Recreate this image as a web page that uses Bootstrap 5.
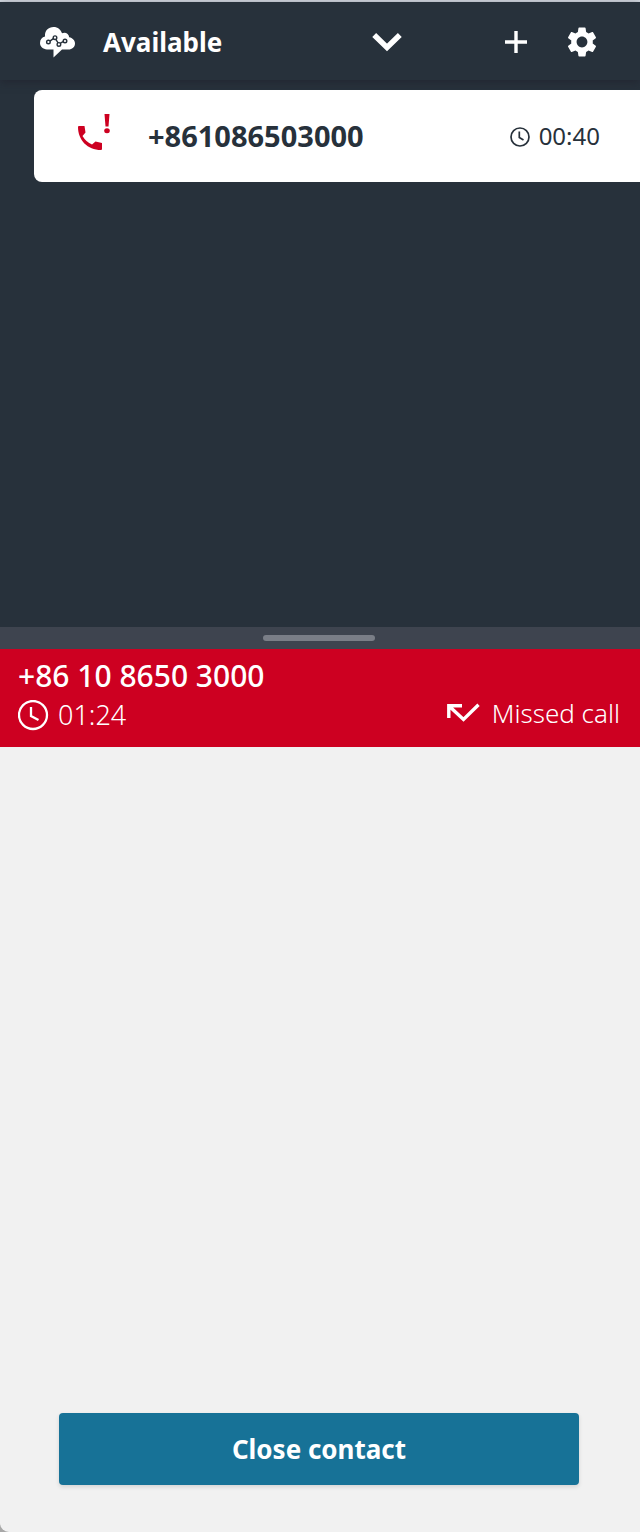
<!DOCTYPE html>
<html lang="en">
<head>
<meta charset="utf-8">
<meta name="viewport" content="width=device-width, initial-scale=1">
<title>Contact Control Panel</title>
<link href="https://cdn.jsdelivr.net/npm/bootstrap@5.3.0/dist/css/bootstrap.min.css" rel="stylesheet">
<style>
  body { font-family: "Noto Sans", "Open Sans", sans-serif; background: #f1f1f1; color: #fff; }
  svg { display: block; flex: none; }
  .ccp { display: grid; grid-template-rows: 627fr 22px 883fr; min-height: 100vh; border-bottom-left-radius: 9px; background: #f1f1f1; overflow: hidden; }
  .ccp-backdrop { background: #a8a8a8; }
  .contacts-pane { background: #27313b; border-top: 2px solid #d5dbe3; }
  .status-bar { height: 78px; padding: 2px 40px 0; box-shadow: 0 2px 8px rgba(30, 28, 40, .5); }
  .plain-btn { background: none; border: 0; padding: 0; color: inherit; }
  .status-btn { width: 363px; font-size: 26px; font-weight: 700; line-height: 36px; }
  .status-label { margin-left: 28px; }
  .status-actions { gap: 37px; }
  .contact-row { height: 92px; margin: 10px 0 0 34px; padding: 0 40px 0 42px; background: #fff; color: #27313b; border-radius: 8px 0 0 8px; text-decoration: none; }
  .contact-number { margin-left: 36px; font-size: 29px; font-weight: 700; }
  .contact-time { font-size: 24px; gap: 8px; }
  .resize-bar { background: #3e444f; padding-right: 2px; }
  .resize-grip { width: 112px; height: 6px; border-radius: 3px; background: #7a7e87; }
  .call-banner { height: 98px; padding: 8px 20px 0 18px; background: #cd0021; }
  .call-number { font-size: 30px; font-weight: 500; line-height: 38px; margin: 0; }
  .call-time { font-size: 27px; font-weight: 300; line-height: 40px; gap: 9px; }
  .call-state { font-size: 26px; font-weight: 300; line-height: 36px; gap: 9px; }
  .close-area { padding: 0 61px 47px 59px; }
  .close-btn { height: 72px; font-size: 26px; font-weight: 700; color: #fff; background: #177297; border: 0; border-radius: 4px; box-shadow: 0 2px 4px rgba(0, 0, 0, .12); }
  .close-btn:hover { color: #fff; background: #126283; }
</style>
</head>
<body>
<div class="ccp-backdrop">
<div class="ccp">
  <section class="contacts-pane" aria-label="Contacts">
    <header class="status-bar d-flex align-items-center justify-content-between">
      <button type="button" class="plain-btn status-btn d-flex align-items-center" aria-haspopup="listbox">
        <svg width="35" height="32" viewBox="0 0 35 32" aria-hidden="true">
          <path fill="#fff" d="M7 23.500C3 23 0 20.500 0 17C0 13.500 2 11.300 5 10.500C4.500 4.500 8.500 1 13.500 1C18 1 20.700 3.500 22 7.300C25 5.700 29 7.500 29.200 11.300C32.500 12 35 14.300 35 17.500C35 21 32 23.500 28.500 23.500H22L13.500 31.500V23.500Z"/>
          <g fill="none" stroke="#27313b" stroke-width="1.400"><path d="M9.900 15.100L13.300 12.600M15.800 13.400L18.100 16.800M20.400 17.200L23.200 15.700"/><circle cx="8.400" cy="16" r="1.800"/><circle cx="15" cy="11.700" r="1.800"/><circle cx="18.900" cy="18.400" r="1.800"/><circle cx="25" cy="15" r="1.800"/></g>
        </svg>
        <span class="status-label">Available</span>
        <svg class="ms-auto" width="32" height="20" viewBox="0 0 32 20" aria-hidden="true"><path d="M3.200 3L16 15.500L28.800 3" fill="none" stroke="#fff" stroke-width="5.500"/></svg>
      </button>
      <div class="status-actions d-flex align-items-center">
        <button type="button" class="plain-btn" aria-label="New contact"><svg width="22" height="22" viewBox="0 0 22 22"><path d="M11 0V22M0 11H22" stroke="#fff" stroke-width="3.400"/></svg></button>
        <button type="button" class="plain-btn" aria-label="Settings"><svg width="36" height="36" viewBox="0 0 24 24"><path fill="#fff" d="M19.140 12.940c.04-.3.060-.61.060-.94 0-.32-.02-.64-.07-.94l2.030-1.580c.18-.14.230-.41.120-.61l-1.920-3.320c-.12-.22-.37-.29-.59-.22l-2.390.96c-.5-.38-1.030-.7-1.620-.94l-.36-2.540c-.04-.24-.24-.41-.48-.41h-3.840c-.24 0-.43.170-.47.410l-.36 2.540c-.59.240-1.130.57-1.620.94l-2.390-.96c-.22-.08-.47 0-.59.220L2.740 8.870c-.12.210-.08.470.12.610l2.030 1.580c-.05.300-.09.630-.09.940s.02.640.070.940l-2.030 1.580c-.18.140-.23.410-.12.610l1.920 3.320c.12.220.37.290.59.220l2.390-.96c.5.380 1.030.7 1.620.94l.36 2.540c.05.240.24.410.48.410h3.840c.24 0 .44-.17.470-.41l.36-2.540c.59-.24 1.130-.56 1.620-.94l2.390.96c.22.080.47 0 .59-.22l1.920-3.320c.12-.22.070-.47-.12-.61l-2.010-1.580zM12 15.600c-1.980 0-3.600-1.620-3.600-3.600s1.620-3.600 3.600-3.600 3.600 1.620 3.600 3.600-1.620 3.600-3.600 3.600z"/></svg></button>
      </div>
    </header>
    <a href="#call" class="contact-row d-flex align-items-center">
      <svg width="36" height="48" viewBox="0 0 36 48" aria-hidden="true"><path fill="#cd0021" d="M2 15Q2 14 3 14H8.500L9.500 20.500L6.500 24Q10 30 16 32.500L19.500 29.500L26 31V37Q26 38 25 38C11.500 38 2 28 2 15ZM28.500 2H33.500L32.500 14.500H29.500Z"/><ellipse cx="31" cy="18.800" rx="2.800" ry="2.500" fill="#cd0021"/></svg>
      <span class="contact-number">+861086503000</span>
      <span class="contact-time d-flex align-items-center ms-auto">
        <svg width="21" height="22" viewBox="0 0 21 22" aria-hidden="true"><g fill="none" stroke="#27313b" stroke-width="1.700"><circle cx="10" cy="12" r="9"/><path d="M9.300 6.500V12.500L13.500 15"/></g></svg>
        <span>00:40</span>
      </span>
    </a>
  </section>
  <div class="resize-bar d-flex align-items-center justify-content-center" role="separator" aria-label="Resize panes"><div class="resize-grip"></div></div>
  <main id="call" class="d-flex flex-column">
    <section class="call-banner">
      <h1 class="call-number">+86 10 8650 3000</h1>
      <div class="d-flex align-items-start justify-content-between">
        <span class="call-time d-flex align-items-center">
          <svg width="31" height="31" viewBox="0 0 31 31" aria-hidden="true"><g fill="none" stroke="#fff" stroke-width="2.300"><circle cx="15" cy="15" r="14"/><path d="M13 7V16L20.500 20"/></g></svg>
          <span>01:24</span>
        </span>
        <span class="call-state d-flex align-items-center">
          <svg width="36" height="20" viewBox="0 0 36 20" aria-hidden="true"><path d="M1.800 15V2.800H15M2 3L16.500 16.500L31.500 1.800" fill="none" stroke="#fff" stroke-width="3.400"/></svg>
          <span>Missed call</span>
        </span>
      </div>
    </section>
    <div class="close-area mt-auto"><button type="button" class="btn close-btn w-100">Close contact</button></div>
  </main>
</div>
</div>
<script src="https://cdn.jsdelivr.net/npm/bootstrap@5.3.0/dist/js/bootstrap.bundle.min.js"></script>
</body>
</html>
